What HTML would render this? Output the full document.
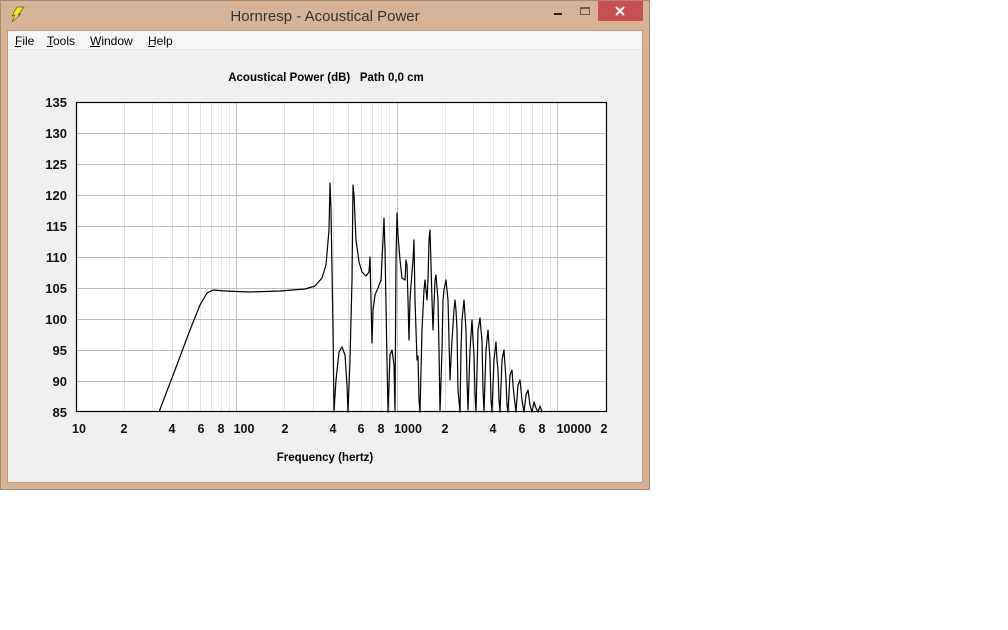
<!DOCTYPE html>
<html><head><meta charset="utf-8"><style>
html,body{margin:0;padding:0;background:#fff;width:1008px;height:630px;overflow:hidden}
svg{display:block}
text{font-family:"Liberation Sans",Arial,sans-serif}
</style></head><body>
<svg width="1008" height="630" viewBox="0 0 1008 630" xmlns="http://www.w3.org/2000/svg">
<rect x="0" y="0" width="650" height="490" fill="#d6b397"/>
<rect x="0.5" y="0.5" width="649" height="489" fill="none" stroke="#a58a72"/>
<rect x="7" y="30" width="636" height="453" fill="#f0f0f0"/>
<rect x="7.5" y="30.5" width="635" height="452" fill="none" stroke="#b59a80"/>
<rect x="8" y="31" width="634" height="18" fill="#f5f6f7"/>
<line x1="8" y1="49.5" x2="642" y2="49.5" stroke="#e6e6e6"/>
<polygon points="17,7 24,7 18,15 21,14 12,22 15,15 12,16" fill="#f5e52a" stroke="#6a5a20" stroke-width="0.7"/>
<text x="325" y="21" font-size="15" fill="#333" text-anchor="middle">Hornresp - Acoustical Power</text>
<rect x="554" y="13" width="8" height="2" fill="#222"/>
<rect x="580.5" y="7.5" width="9" height="7" fill="none" stroke="#6b5a4c"/>
<line x1="580" y1="8.5" x2="590" y2="8.5" stroke="#6b5a4c"/>
<rect x="598" y="1" width="45" height="20" fill="#c75050"/>
<path d="M616,7 L624,15 M624,7 L616,15" stroke="#fff" stroke-width="2"/>
<g font-size="12" fill="#000">
<text x="15" y="45">File</text><text x="47" y="45">Tools</text><text x="90" y="45">Window</text><text x="148" y="45">Help</text>
</g>
<g stroke="#000" stroke-width="1">
<line x1="15" y1="46.5" x2="21" y2="46.5"/><line x1="47" y1="46.5" x2="53" y2="46.5"/><line x1="90" y1="46.5" x2="100" y2="46.5"/><line x1="148" y1="46.5" x2="155" y2="46.5"/>
</g>
<text x="326" y="81" font-size="11.5" font-weight="bold" text-anchor="middle" fill="#000" xml:space="preserve">Acoustical Power (dB)   Path 0,0 cm</text>
<rect x="76" y="102" width="531" height="310" fill="#fff"/>
<g stroke="#e2e2e2" stroke-width="1">
<path d="M124.5,102V412M152.5,102V412M172.5,102V412M188.5,102V412M200.5,102V412M211.5,102V412M221.5,102V412M229.5,102V412
M284.5,102V412M313.5,102V412M333.5,102V412M348.5,102V412M361.5,102V412M372.5,102V412M381.5,102V412M389.5,102V412
M445.5,102V412M473.5,102V412M493.5,102V412M509.5,102V412M521.5,102V412M532.5,102V412M542.5,102V412M550.5,102V412"/>
</g>
<g stroke="#c0c0c0" stroke-width="1">
<path d="M236.5,102V412M397.5,102V412M557.5,102V412"/>
<path d="M76,133.5H607M76,164.5H607M76,195.5H607M76,226.5H607M76,257.5H607M76,288.5H607M76,319.5H607M76,350.5H607M76,381.5H607"/>
</g>
<path fill="none" stroke="#000" stroke-width="1.2" stroke-linejoin="round" d="M159,412 L175,370 L190,330 L200,305 L207,293 L213,290 L225,291 L250,292 L280,291 L305,289 L315,286 L322,278 L326,265 L329,230 L330,183 L331,210 L332,270 L333,330 L334,412 L336,380 L339,352 L342,347 L345,355 L347,385 L348,412 L350,360 L352,280 L353,185 L354,195 L356,240 L359,262 L362,272 L366,276 L369,272 L370,257 L371,300 L372,343 L373,310 L375,295 L378,288 L381,280 L383,240 L384,218 L385,250 L387,360 L388,412 L390,355 L392,350 L394,365 L395,412 L396,260 L397,213 L398,235 L400,260 L402,278 L405,280 L406,260 L407,265 L408,300 L409,340 L410,300 L411,285 L413,260 L414,240 L415,300 L417,360 L418,356 L419,400 L420,412 L422,330 L424,290 L425,280 L426,290 L427,300 L428,280 L429,240 L430,230 L431,265 L432,300 L433,330 L435,280 L436,275 L438,300 L439,350 L440,412 L442,350 L443,300 L444,290 L446,280 L447,290 L448,300 L449,340 L450,380 L452,340 L454,310 L455,300 L456,310 L457,330 L458,390 L460,412 L461,350 L462,320 L464,300 L465,315 L466,330 L467,380 L468,410 L470,350 L472,320 L473,340 L474,355 L475,395 L476,412 L478,330 L480,318 L481,330 L482,340 L483,390 L484,412 L486,350 L488,330 L489,345 L490,360 L491,400 L492,412 L494,360 L496,342 L497,360 L498,370 L499,400 L500,412 L502,360 L504,350 L505,365 L506,380 L507,405 L508,412 L510,375 L512,370 L513,385 L514,395 L516,412 L518,385 L520,380 L522,400 L524,412 L526,395 L528,390 L530,405 L532,412 L534,402 L536,408 L538,412 L540,406 L542,412"/>
<rect x="76.5" y="102.5" width="530" height="309" fill="none" stroke="#000" stroke-width="1.2"/>
<g font-size="13" font-weight="bold" fill="#111" text-anchor="end">
<text x="67" y="107">135</text><text x="67" y="138">130</text><text x="67" y="169">125</text><text x="67" y="200">120</text><text x="67" y="231">115</text><text x="67" y="262">110</text><text x="67" y="293">105</text><text x="67" y="324">100</text><text x="67" y="355">95</text><text x="67" y="386">90</text><text x="67" y="417">85</text>
</g>
<g font-size="12.5" font-weight="bold" fill="#111" text-anchor="middle">
<text x="79" y="433">10</text><text x="124" y="433">2</text><text x="172" y="433">4</text><text x="201" y="433">6</text><text x="221" y="433">8</text><text x="244" y="433">100</text><text x="285" y="433">2</text><text x="333" y="433">4</text><text x="361" y="433">6</text><text x="381" y="433">8</text><text x="408" y="433">1000</text><text x="445" y="433">2</text><text x="493" y="433">4</text><text x="522" y="433">6</text><text x="542" y="433">8</text><text x="574" y="433">10000</text><text x="604" y="433">2</text>
</g>
<text x="325" y="461" font-size="11.5" font-weight="bold" text-anchor="middle" fill="#000">Frequency (hertz)</text>
</svg>
</body></html>
